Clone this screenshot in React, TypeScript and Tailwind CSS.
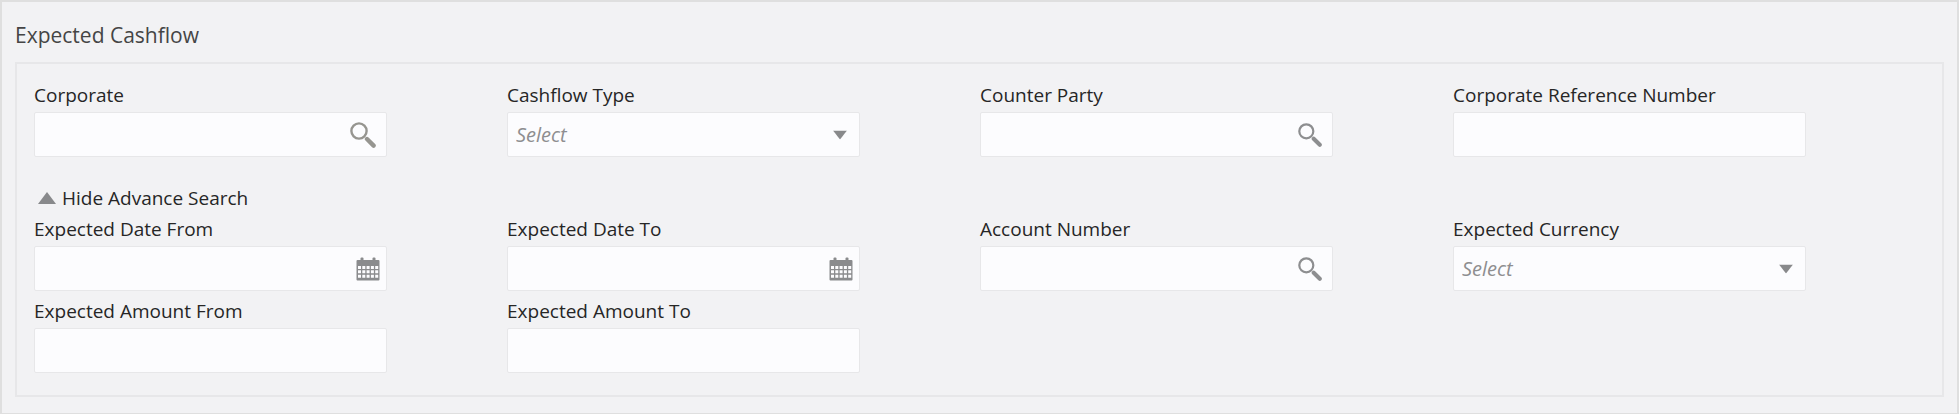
import { useId, useState } from 'react';
import type { ReactNode } from 'react';

function SearchIcon({ className }: { className: string }) {
  return (
    <svg className={className} viewBox="0 0 26 26" fill="none" stroke="currentColor" aria-hidden="true">
      <circle cx="9" cy="9" r="7.6" strokeWidth="2.4" />
      <path d="M17 17 23.6 23.6" strokeWidth="4.4" strokeLinecap="round" />
    </svg>
  );
}

function CalendarIcon() {
  return (
    <svg className="w-6 h-6" viewBox="0 0 24 24" fill="currentColor" aria-hidden="true">
      <rect x="4.5" y="0.5" width="3" height="5" rx="1" />
      <rect x="16.5" y="0.5" width="3" height="5" rx="1" />
      <path
        fillRule="evenodd"
        d="M1.5 3h21a1 1 0 0 1 1 1v18.5a1 1 0 0 1-1 1h-21a1 1 0 0 1-1-1V4a1 1 0 0 1 1-1ZM2 9v3h3V9ZM6.3 9v3h3V9ZM10.6 9v3h3V9ZM14.9 9v3h3V9ZM19.2 9v3h3V9ZM2 13.3v3h3v-3ZM6.3 13.3v3h3v-3ZM10.6 13.3v3h3v-3ZM14.9 13.3v3h3v-3ZM19.2 13.3v3h3v-3ZM2 17.8v3h3v-3ZM6.3 17.8v3h3v-3ZM10.6 17.8v3h3v-3ZM14.9 17.8v3h3v-3ZM19.2 17.8v3h3v-3Z"
      />
    </svg>
  );
}

const labelClass = 'block text-[19px] leading-[26px] text-[#262626] whitespace-nowrap';
const boxClass = 'mt-1 flex h-[45px] rounded-xs border border-[#e7e7e9] bg-[#fcfcfe]';

function TextField({ label, action }: { label: string; action?: ReactNode }) {
  const id = useId();

  return (
    <div className="pr-30">
      <label htmlFor={id} className={labelClass}>{label}</label>
      <div className={boxClass}>
        <input id={id} type="text" className="flex-1 min-w-0 px-2 text-[19px] text-[#262626] outline-none" />
        {action}
      </div>
    </div>
  );
}

function SearchField({ label, large = false }: { label: string; large?: boolean }) {
  return (
    <TextField
      label={label}
      action={
        <button
          type="button"
          aria-label={`Search ${label}`}
          className={large ? 'px-2.5 text-[#969590]' : 'px-2.5 text-[#8d8e90]'}
        >
          <SearchIcon className={large ? 'w-[26px] h-[26px]' : 'w-6 h-6'} />
        </button>
      }
    />
  );
}

function DateField({ label }: { label: string }) {
  return (
    <TextField
      label={label}
      action={
        <button type="button" aria-label={`Pick ${label}`} className="px-1.5 text-[#8a8b8d]">
          <CalendarIcon />
        </button>
      }
    />
  );
}

function SelectField({ label }: { label: string }) {
  const id = useId();

  return (
    <div className="pr-30">
      <label htmlFor={id} className={labelClass}>{label}</label>
      <div className={`relative ${boxClass}`}>
        <select
          id={id}
          className="flex-1 min-w-0 appearance-none pl-2 pr-9 text-[20px] italic text-[#8e8e90] outline-none"
        >
          <option>Select</option>
        </select>
        <svg
          className="absolute right-3 top-1/2 -translate-y-1/2 w-[14px] h-[9px] pointer-events-none text-[#88898b]"
          viewBox="0 0 14 9"
          fill="currentColor"
          aria-hidden="true"
        >
          <path d="M0 0h14L7 9z" />
        </svg>
      </div>
    </div>
  );
}

export default function App() {
  const [showAdvance, setShowAdvance] = useState(true);

  return (
    <div className="border-2 border-[#dfdfdf] bg-[#f2f2f4] px-[13px] pt-[18px] pb-4 font-['Open_Sans','Noto_Sans',sans-serif]">
      <h1 className="text-[21px] leading-[30px] text-[#454545]">Expected Cashflow</h1>

      <form
        className="mt-3 border-2 border-[#e7e7e9] pl-[17px] pr-4 pt-[18px] pb-[22px]"
        onSubmit={(e) => e.preventDefault()}
      >
        <div className="grid grid-cols-4">
          <SearchField label="Corporate" large />
          <SelectField label="Cashflow Type" />
          <SearchField label="Counter Party" />
          <TextField label="Corporate Reference Number" />
        </div>

        <button
          type="button"
          aria-expanded={showAdvance}
          onClick={() => setShowAdvance(!showAdvance)}
          className="mt-[27px] mb-1 ml-1 flex items-center gap-1.5 text-[19px] leading-7 text-[#262626]"
        >
          <svg
            className={showAdvance ? 'w-[18px] h-3 text-[#88898b]' : 'w-[18px] h-3 rotate-180 text-[#88898b]'}
            viewBox="0 0 18 12"
            fill="currentColor"
            aria-hidden="true"
          >
            <path d="M9 0l9 12H0z" />
          </svg>
          {showAdvance ? 'Hide Advance Search' : 'Show Advance Search'}
        </button>

        {showAdvance && (
          <div className="grid grid-cols-4 gap-y-[7px]">
            <DateField label="Expected Date From" />
            <DateField label="Expected Date To" />
            <SearchField label="Account Number" />
            <SelectField label="Expected Currency" />
            <TextField label="Expected Amount From" />
            <TextField label="Expected Amount To" />
          </div>
        )}
      </form>
    </div>
  );
}
